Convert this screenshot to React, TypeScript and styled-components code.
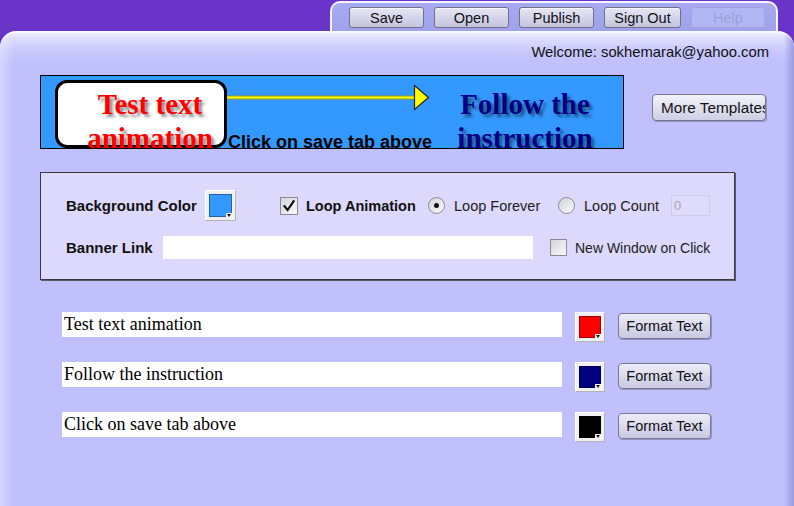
import React from "react";
import styled, { createGlobalStyle } from "styled-components";

const GlobalStyle = createGlobalStyle`
  html, body { margin: 0; padding: 0; background: #6a34c8; }
  body { font-family: "Liberation Sans", Arial, sans-serif; }
  * { box-sizing: border-box; }
`;

const Page = styled.div`
  width: 794px;
  height: 506px;
  overflow: hidden;
  background: #6a34c8;
  display: flex;
  flex-direction: column;
`;

const TopBar = styled.div`
  height: 31px;
  display: flex;
  justify-content: flex-end;
  align-items: flex-end;
  padding-right: 16px;
`;

const TabPanel = styled.div`
  width: 448px;
  height: 30px;
  border: 2px solid #f4f4ff;
  border-bottom: none;
  border-radius: 10px 10px 0 0;
  background: linear-gradient(#a6aaf0, #9ea2ea);
  display: flex;
  gap: 10px;
  padding: 4px 0 0 17px;
`;

const TopButton = styled.button<{ $w?: number; $disabled?: boolean }>`
  width: ${(p) => p.$w ?? 75}px;
  height: 21px;
  padding: 0;
  font-family: "Liberation Sans", Arial, sans-serif;
  font-size: 14.5px;
  color: ${(p) => (p.$disabled ? "#9a9fda" : "#111")};
  border: 1px solid ${(p) => (p.$disabled ? "#a0a4de" : "#70708a")};
  border-radius: 3px;
  background: ${(p) =>
    p.$disabled ? "#b2b6f2" : "linear-gradient(#e6e6f6, #c4c4de)"};
  box-shadow: ${(p) => (p.$disabled ? "none" : "inset 0 1px 0 #f6f6ff")};
`;

const MainPanel = styled.div`
  flex: 1;
  border-radius: 16px 16px 0 0;
  border-top: 2px solid #fbfbff;
  background:
    linear-gradient(to right, rgba(255,255,255,0.35), rgba(255,255,255,0) 14px),
    linear-gradient(to left, rgba(150,150,224,0.9), rgba(150,150,224,0) 10px),
    linear-gradient(#ececfe 0px, #dcdcfd 6px, #c8c8fd 18px, #bfc0fc 30px);
  padding-top: 10px;
  display: flex;
  flex-direction: column;
`;

const Welcome = styled.div`
  height: 18px;
  line-height: 18px;
  font-size: 14.8px;
  color: #111;
  text-align: right;
  padding-right: 25px;
`;

const BannerRow = styled.div`
  margin-top: 14px;
  display: flex;
  align-items: flex-start;
`;

const Banner = styled.div`
  margin-left: 40px;
  width: 584px;
  height: 74px;
  border: 1px solid #000;
  background: #3399ff;
  position: relative;
  overflow: hidden;
`;

const WhiteBox = styled.div`
  position: absolute;
  left: 14px;
  top: 4px;
  width: 172px;
  height: 68px;
  border: 3px solid #000;
  border-radius: 12px;
  background: #fff;
`;

const BannerText = styled.div<{ $color: string; $left: number; $width: number }>`
  position: absolute;
  left: ${(p) => p.$left}px;
  width: ${(p) => p.$width}px;
  top: 11px;
  text-align: center;
  font-family: "Liberation Serif", "Times New Roman", serif;
  font-weight: bold;
  font-size: 29px;
  line-height: 34px;
  color: ${(p) => p.$color};
  text-shadow: 3px 3px 3px rgba(0, 0, 0, 0.45);
  white-space: nowrap;
`;

const ClickText = styled.div`
  position: absolute;
  left: 187px;
  top: 57px;
  font-family: "Liberation Sans", Arial, sans-serif;
  font-weight: bold;
  font-size: 18px;
  line-height: 18px;
  color: #000;
  white-space: nowrap;
`;

const ArrowSvg = styled.svg`
  position: absolute;
  left: 186px;
  top: 8px;
`;

const MoreButton = styled.button`
  margin-left: 28px;
  margin-top: 19px;
  width: 114px;
  height: 27px;
  padding: 0 0 0 8px;
  text-align: left;
  overflow: hidden;
  white-space: nowrap;
  font-family: "Liberation Sans", Arial, sans-serif;
  font-size: 15.3px;
  color: #111;
  border: 1px solid #7a7a8e;
  border-radius: 4px;
  background: linear-gradient(#f2f2fa, #cfcfe4);
  box-shadow: 1px 1px 0 rgba(60, 60, 90, 0.35);
`;

const Settings = styled.div`
  margin-top: 23px;
  margin-left: 40px;
  width: 695px;
  height: 108px;
  border: 1px solid #3a3a44;
  box-shadow: 1px 1px 0 #5a5a6a;
  background: #dcd9fc;
  padding: 17px 0 0 25px;
`;

const SettingsRow = styled.div<{ $h: number; $mt?: number }>`
  display: flex;
  align-items: center;
  height: ${(p) => p.$h}px;
  margin-top: ${(p) => p.$mt ?? 0}px;
`;

const Label = styled.div<{ $w: number; $bold?: boolean; $fs?: number }>`
  width: ${(p) => p.$w}px;
  font-size: ${(p) => p.$fs ?? (p.$bold ? 15 : 14.5)}px;
  font-weight: ${(p) => (p.$bold ? "bold" : "normal")};
  color: ${(p) => (p.$bold ? "#111" : "#222")};
  white-space: nowrap;
`;

const Swatch = styled.div<{ $ml?: number; $size: number }>`
  position: relative;
  width: ${(p) => p.$size}px;
  height: ${(p) => p.$size}px;
  margin-left: ${(p) => p.$ml ?? 0}px;
  background: #f0f0f0;
  border: 1px solid;
  border-color: #ffffff #b4b4b4 #b4b4b4 #ffffff;
  padding: 3px;
  flex-shrink: 0;
`;

const SwatchColor = styled.div<{ $c: string }>`
  width: 100%;
  height: 100%;
  background: ${(p) => p.$c};
  border: 1px solid rgba(0, 0, 0, 0.35);
`;

const SwatchArrow = styled.span`
  position: absolute;
  right: 2px;
  bottom: 2px;
  width: 7px;
  height: 5px;
  background: #f4f4f4;
  &::after {
    content: "";
    position: absolute;
    left: 1px;
    top: 1px;
    border-left: 2.5px solid transparent;
    border-right: 2.5px solid transparent;
    border-top: 3px solid #111;
  }
`;

const CheckBox = styled.div<{ $ml?: number; $size: number }>`
  width: ${(p) => p.$size}px;
  height: ${(p) => p.$size}px;
  margin-left: ${(p) => p.$ml ?? 0}px;
  margin-right: 8px;
  border: 1px solid #8a8a94;
  background: linear-gradient(135deg, #d4d4dc, #f8f8fc);
  display: flex;
  align-items: center;
  justify-content: center;
  flex-shrink: 0;
`;

const Radio = styled.div<{ $on?: boolean }>`
  width: 17px;
  height: 17px;
  margin-right: 9px;
  border-radius: 50%;
  border: 1px solid #8a8a94;
  background: linear-gradient(135deg, #d2d2da, #fafafe);
  display: flex;
  align-items: center;
  justify-content: center;
  flex-shrink: 0;
  &::after {
    content: "";
    width: 5px;
    height: 5px;
    border-radius: 50%;
    background: ${(p) => (p.$on ? "#111" : "transparent")};
  }
`;

const CountInput = styled.div`
  width: 39px;
  height: 21px;
  background: #dedcfa;
  border: 1px solid #cfcdef;
  color: #a8a8b8;
  font-size: 13px;
  line-height: 19px;
  padding-left: 2px;
`;

const LinkInput = styled.div`
  width: 370px;
  height: 23px;
  background: #fff;
`;

const TextRows = styled.div`
  margin-top: 32px;
  display: flex;
  flex-direction: column;
  gap: 20px;
`;

const TextRow = styled.div`
  display: flex;
  align-items: flex-start;
  height: 30px;
`;

const TextField = styled.input`
  margin-left: 62px;
  width: 500px;
  height: 25px;
  border: none;
  outline: none;
  background: #fff;
  padding: 0 2px;
  font-family: "Liberation Serif", "Times New Roman", serif;
  font-size: 18px;
  color: #000;
`;

const FormatButton = styled.button`
  margin-left: 13px;
  margin-top: 1px;
  width: 93px;
  height: 26px;
  padding: 0;
  font-family: "Liberation Sans", Arial, sans-serif;
  font-size: 14.5px;
  color: #111;
  border: 1px solid #7a7a8e;
  border-radius: 4px;
  background: linear-gradient(#ececf8, #c8c8e2);
  box-shadow: 1px 1px 0 rgba(60, 60, 90, 0.35);
`;

const Check = () => (
  <svg width="14" height="14" viewBox="0 0 14 14">
    <path d="M2.5 7.2 L5.6 11 L11.6 2.2" fill="none" stroke="#111" strokeWidth="2.2" strokeLinecap="square" />
  </svg>
);

const ColorBox = ({ c, ml, size }: { c: string; ml?: number; size: number }) => (
  <Swatch $ml={ml} $size={size}>
    <SwatchColor $c={c} />
    <SwatchArrow />
  </Swatch>
);

const rows = [
  { text: "Test text animation", color: "#ff0000" },
  { text: "Follow the instruction", color: "#000080" },
  { text: "Click on save tab above", color: "#000000" },
];

export default function App() {
  return (
    <Page>
      <GlobalStyle />
      <TopBar>
        <TabPanel>
          <TopButton>Save</TopButton>
          <TopButton>Open</TopButton>
          <TopButton>Publish</TopButton>
          <TopButton $w={77}>Sign Out</TopButton>
          <TopButton $w={74} $disabled>Help</TopButton>
        </TabPanel>
      </TopBar>
      <MainPanel>
        <Welcome>Welcome: sokhemarak@yahoo.com</Welcome>
        <BannerRow>
          <Banner>
            <WhiteBox />
            <ArrowSvg width="204" height="30" viewBox="0 0 204 30">
              <rect x="0" y="11.5" width="189" height="4" fill="#9c9c1c" />
              <rect x="0" y="12.5" width="189" height="2" fill="#ffff00" />
              <path d="M187.5 1.5 L201.5 13.5 L187.5 25.5 Z" fill="#ffff00" stroke="#222" strokeWidth="1.2" />
            </ArrowSvg>
            <BannerText $color="#ff0000" $left={0} $width={218}>
              Test text
              <br />
              animation
            </BannerText>
            <ClickText>Click on save tab above</ClickText>
            <BannerText $color="#000080" $left={384} $width={200}>
              Follow the
              <br />
              instruction
            </BannerText>
          </Banner>
          <MoreButton>More Templates</MoreButton>
        </BannerRow>
        <Settings>
          <SettingsRow $h={31}>
            <Label $w={139} $bold>Background Color</Label>
            <ColorBox c="#3399ff" size={31} />
            <CheckBox $ml={44} $size={18}>
              <Check />
            </CheckBox>
            <Label $w={122} $bold $fs={14.5}>Loop Animation</Label>
            <Radio $on />
            <Label $w={104}>Loop Forever</Label>
            <Radio />
            <Label $w={87}>Loop Count</Label>
            <CountInput>0</CountInput>
          </SettingsRow>
          <SettingsRow $h={23} $mt={15}>
            <Label $w={97} $bold>Banner Link</Label>
            <LinkInput />
            <CheckBox $ml={17} $size={17} />
            <Label $w={150} $fs={14}>New Window on Click</Label>
          </SettingsRow>
        </Settings>
        <TextRows>
          {rows.map((r) => (
            <TextRow key={r.text}>
              <TextField defaultValue={r.text} readOnly />
              <ColorBox c={r.color} ml={13} size={30} />
              <FormatButton>Format Text</FormatButton>
            </TextRow>
          ))}
        </TextRows>
      </MainPanel>
    </Page>
  );
}
